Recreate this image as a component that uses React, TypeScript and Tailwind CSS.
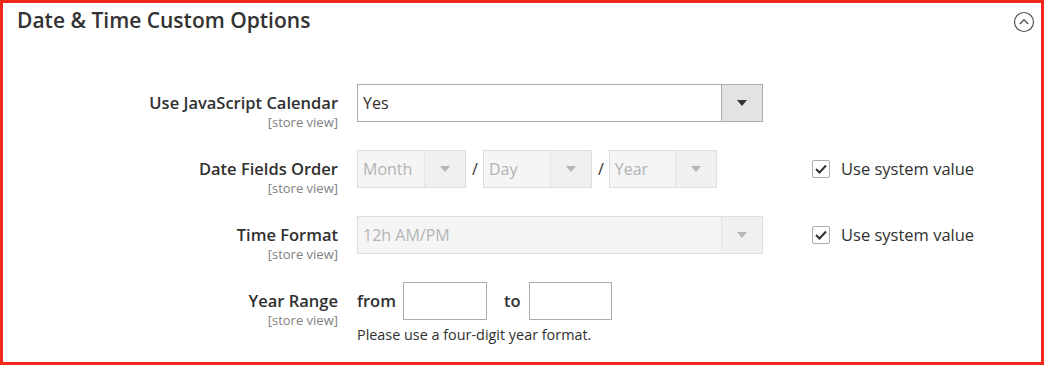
import React from 'react';

const font = { fontFamily: '"Open Sans", "Liberation Sans", sans-serif' };

function Arrow({ disabled }: { disabled?: boolean }) {
  return (
    <svg width="10" height="6" viewBox="0 0 10 6">
      <path d="M0 0h10L5 6z" fill={disabled ? '#b5b5b5' : '#333'} />
    </svg>
  );
}

function Select({ value, width, disabled }: { value: string; width: string; disabled?: boolean }) {
  return (
    <div
      className={`flex h-[38px] border ${width} ${
        disabled ? 'border-[#dedede] bg-[#f5f5f5] text-[#b3b3b3]' : 'border-[#adadad] bg-white text-[#303030]'
      }`}
    >
      <div className="flex flex-1 items-center pl-[5px] text-[16px] overflow-hidden whitespace-nowrap">{value}</div>
      <div
        className={`flex w-[41px] items-center justify-center border-l ${
          disabled ? 'border-[#e3e3e3] bg-[#f0f0f0]' : 'border-[#adadad] bg-[#e3e3e3]'
        }`}
      >
        <Arrow disabled={disabled} />
      </div>
    </div>
  );
}

function Label({ title }: { title: string }) {
  return (
    <div className="w-[335px] shrink-0 text-right">
      <div className="pt-[8px] text-[16.5px] font-semibold leading-[22px] text-[#303030]">{title}</div>
      <div className="text-[13px] leading-[16px] text-[#808080]">[store view]</div>
    </div>
  );
}

function SystemValue() {
  return (
    <div className="flex h-[38px] items-center gap-[11px]">
      <div className="flex h-[18px] w-[18px] items-center justify-center rounded-[2px] border border-[#adadad] bg-white">
        <svg width="12" height="10" viewBox="0 0 12 10">
          <path d="M1 5l3.5 3.5L11 1.5" fill="none" stroke="#303030" strokeWidth="2" />
        </svg>
      </div>
      <span className="text-[16.5px] text-[#303030]">Use system value</span>
    </div>
  );
}

export default function App() {
  return (
    <div className="bg-white w-[1051px] h-[373px]" style={font}>
      <div className="w-[1044px] h-[365px] border-[3px] border-[#f2261b]">
        <div className="flex h-[35px] justify-between pl-[14px] pr-[6px] pt-[4px]">
          <h2 className="text-[21px] font-semibold leading-[26px] text-[#333]">Date &amp; Time Custom Options</h2>
          <svg width="22" height="22" viewBox="0 0 22 22" className="mt-[4px]">
            <circle cx="11" cy="11" r="9.5" fill="none" stroke="#555" strokeWidth="1.2" />
            <path d="M6.8 13l4.2-4.2 4.2 4.2" fill="none" stroke="#555" strokeWidth="1.4" />
          </svg>
        </div>

        <div className="mt-[46px] flex flex-col gap-[20px]">
          <div className="flex gap-[19px]">
            <Label title="Use JavaScript Calendar" />
            <Select value="Yes" width="w-[406px]" />
          </div>

          <div className="flex gap-[19px]">
            <Label title="Date Fields Order" />
            <div className="flex w-[436px] items-start">
              <Select value="Month" width="w-[109px]" disabled />
              <span className="ml-[6px] mr-[5px] text-[16px] leading-[38px] text-[#303030]">/</span>
              <Select value="Day" width="w-[109px]" disabled />
              <span className="ml-[6px] mr-[5px] text-[16px] leading-[38px] text-[#303030]">/</span>
              <Select value="Year" width="w-[108px]" disabled />
            </div>
            <SystemValue />
          </div>

          <div className="flex gap-[19px]">
            <Label title="Time Format" />
            <div className="w-[436px]">
              <Select value="12h AM/PM" width="w-[406px]" disabled />
            </div>
            <SystemValue />
          </div>

          <div className="flex gap-[19px]">
            <Label title="Year Range" />
            <div>
              <div className="flex items-center">
                <span className="text-[16.5px] font-semibold text-[#303030]">from</span>
                <input className="ml-[7px] h-[38px] w-[84px] border border-[#adadad] bg-white" />
                <span className="ml-[17px] text-[16.5px] font-semibold text-[#303030]">to</span>
                <input className="ml-[8px] h-[38px] w-[83px] border border-[#adadad] bg-white" />
              </div>
              <div className="mt-[6px] text-[14.4px] leading-[18px] text-[#303030]">Please use a four-digit year format.</div>
            </div>
          </div>
        </div>
      </div>
    </div>
  );
}
